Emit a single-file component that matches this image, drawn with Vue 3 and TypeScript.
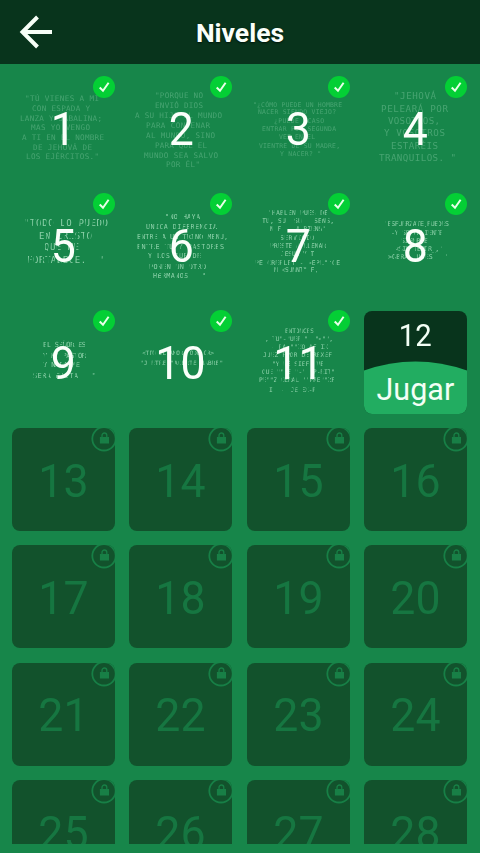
<script setup lang="ts">
// A verse line: text, left edge, right edge, vertical centre (tile units)
type Line = [string, number, number, number]
interface Verse {
  size: number
  worn?: boolean
  lines: Line[]
}

const verses: Verse[] = [
  { size: 7.6, lines: [
    ['"TÚ VIENES A MÍ', 13, 87, 22], ['CON ESPADA Y', 20, 78, 32], ['LANZA Y JABALINA;', 8, 90, 42],
    ['MAS YO VENGO', 19, 78, 51.5], ['A TI EN EL NOMBRE', 10, 92, 61], ['DE JEHOVÁ DE', 21, 80, 71],
    ['LOS EJÉRCITOS."', 14, 87, 80.5],
  ] },
  { size: 7.6, lines: [
    ['"PORQUE NO', 26, 74, 19], ['ENVIÓ DIOS', 26, 74, 29], ['A SU HIJO AL MUNDO', 6, 93, 39],
    ['PARA CONDENAR', 17, 81, 49], ['AL MUNDO, SINO', 17, 86, 59], ['PARA QUE EL', 26, 78, 69],
    ['MUNDO SEA SALVO', 15, 89, 79], ['POR ÉL"', 37, 71, 88.5],
  ] },
  { size: 6.4, lines: [
    ['"¿CÓMO PUEDE UN HOMBRE', 6, 95, 28.5], ['NACER SIENDO VIEJO?', 11, 89, 36], ['¿PUEDE ACASO', 27, 77, 44.5],
    ['ENTRAR POR SEGUNDA', 15, 89, 53], ['VEZ EN EL', 32, 68, 61], ['VIENTRE DE SU MADRE,', 12, 93, 69.5],
    ['Y NACER? "', 33, 74, 77.5],
  ] },
  { size: 9.2, lines: [
    ['"JEHOVÁ', 30, 72, 20], ['PELEARÁ POR', 17, 84, 32.5], ['VOSOTROS,', 24, 76, 45],
    ['Y VOSOTROS', 20, 81, 57], ['ESTARÉIS', 27, 74, 69.5], ['TRANQUILOS. "', 15, 92, 81.5],
  ] },
  { size: 9, worn: true, lines: [
    ['"TODO LO PUEDO', 12, 96, 29], ['EN CRISTO', 27, 80, 42], ['QUE ME', 32, 67, 53], ['FORTALECE.  "', 15, 92, 66],
  ] },
  { size: 6.8, worn: true, lines: [
    ['"NO HAYA', 36, 71, 23], ['UNICA DIFERENCIA', 17, 88, 33], ['ENTRE A UN TRINO MENU,', 8, 99, 42.5],
    ['ENTRE TU Y PASTORES', 8, 95, 52.5], ['Y LOS QUE DE', 19, 72, 62], ['PONEN UN OTRO', 20, 77, 72.5],
    ['HERMANOS   "', 24, 77, 82],
  ] },
  { size: 6.4, worn: true, lines: [
    ['"HABLEN PUES DE', 21, 81, 19], ['TU, SU  SU   SENS,', 15, 87, 27], ['N F  - A RIENS\'', 23, 79, 35],
    ['SERVICIO', 33, 67, 43.5], ['PRESTE A LLENAR', 23, 79, 52], ['JESUS Y T', 34, 67, 60],
    ['PE CREPLET - >EPL""CE', 8, 93, 69], ['N <SUNNT" F,', 27, 71, 76],
  ] },
  { size: 6.6, worn: true, lines: [
    ['"ESFUERZATE,PUEDES', 20, 85, 30], ['-Y SE VALIENTE', 27, 79, 38.5], ['SIEMPRE', 37, 64, 46.5],
    ['<SIN TEMOR_,"', 31, 79, 55], ['>OBRA LUCES   "', 24, 85, 63],
  ] },
  { size: 7, worn: true, lines: [
    ['EL SEÑOR ES', 31, 74, 33.5], ['Y MI PASTOR', 31, 74, 44], ['Y NADA ME', 31, 68, 53], ['SERA FALTA   "', 21, 84, 64],
  ] },
  { size: 6, worn: true, lines: [
    ['<TTO EL AMOR TODO CR>', 13, 85, 42], ['"J ETRE "ACERTE HABRE"', 11, 94, 52],
  ] },
  { size: 6.2, worn: true, lines: [
    ['ENTONCES', 38, 67, 19.5], [', TU"-"UEP "  "<"",', 18, 86, 27.5], ['- PA ""ZO AF IX', 24, 81, 35.5],
    ['JUEZ FPOR DE REXEF', 16, 85, 44], ['"Y NE SIEFF VE', 25, 77, 52.5], ['QUE "" E "-" "P-EIT"', 15, 88, 60.5],
    ['PE""Z CERAL ""PRE""ZF', 12, 88, 69], ['I  -  JE EX-P', 22, 69, 79],
  ] },
]

const current = 12
const levels = Array.from({ length: 28 }, (_, i) => i + 1)
</script>

<template>
  <div class="screen">
    <header class="bar">
      <svg class="back" viewBox="0 0 36 36" width="36" height="36">
        <path d="M34 18H5M19.5 3L4.5 18L19.5 33" fill="none" stroke="#f7fff7" stroke-width="4" />
      </svg>
      <h1 class="title">Niveles</h1>
    </header>
    <main class="list">
      <div
        v-for="n in levels"
        :key="n"
        class="tile"
        :class="{ done: n < current, locked: n > current, current: n === current }"
      >
        <template v-if="n < current">
          <svg class="verse" :class="{ worn: verses[n - 1].worn }" viewBox="0 0 103 103">
            <text
              v-for="(l, i) in verses[n - 1].lines"
              :key="i"
              :x="l[1]"
              :y="l[3] + verses[n - 1].size * 0.36"
              :font-size="verses[n - 1].size"
              :textLength="l[2] - l[1]"
            >{{ l[0] }}</text>
          </svg>
          <span class="num">{{ n }}</span>
          <svg class="badge" viewBox="0 0 22 22" width="22" height="22">
            <circle cx="11" cy="11" r="11" fill="#04cf35" />
            <path d="M6.7 11.5L10 14.8L15.6 6.8" fill="none" stroke="#e8ffe8" stroke-width="2" />
          </svg>
        </template>
        <template v-else-if="n === current">
          <span class="level">{{ n }}</span>
          <svg class="hill" viewBox="0 0 103 53" width="103" height="53">
            <path d="M0 9.5Q51.5 -8.5 103 9.5V53H0Z" fill="#22ad61" />
          </svg>
          <span class="play">Jugar</span>
        </template>
        <template v-else>
          <span class="num">{{ n }}</span>
          <svg class="lock" viewBox="0 0 24 25" width="24" height="25">
            <path d="M13 0H24V11H13Z" fill="#17864a" />
            <circle cx="13" cy="10.8" r="11.7" fill="#12522c" stroke="#177f46" stroke-width="1.8" />
            <path d="M8.9 8.9H18V15.5H8.9Z" fill="#187f46" />
            <path d="M11 9.2V7.4A2.4 2.4 0 0 1 15.8 7.4V9.2" fill="none" stroke="#187f46" stroke-width="1.3" />
          </svg>
        </template>
      </div>
    </main>
  </div>
</template>

<style>
body {
  margin: 0;
  background: #17864a;
}
</style>

<style scoped>
.screen {
  box-sizing: border-box;
  width: 480px;
  height: 853px;
  padding-bottom: 9.5px;
  display: flex;
  flex-direction: column;
  overflow: hidden;
  background: #17864a;
  font-family: Roboto, "Liberation Sans", sans-serif;
}
.bar {
  flex: none;
  height: 64px;
  display: grid;
  grid-template-columns: 60px 1fr 60px;
  align-items: center;
  background: #08341c;
}
.back {
  margin-left: 18px;
}
.title {
  margin: 1px 0 0;
  color: #fafffa;
  font-size: 26.5px;
  line-height: 32px;
  font-weight: 700;
  text-align: center;
  text-shadow: 0 1px 2px #00150a;
}
.list {
  flex: 1;
  min-height: 0;
  overflow: hidden;
  display: grid;
  grid-template-columns: repeat(4, 103px);
  grid-auto-rows: 103px;
  gap: 14.3px;
  padding: 12.3px 0 0 12px;
}
.tile {
  position: relative;
  display: flex;
  align-items: center;
  justify-content: center;
  border-radius: 8px;
}
.num {
  position: relative;
  padding-top: 2px;
  font-size: 47px;
  line-height: 56px;
  color: #fafffa;
  transform: scaleX(0.95);
}
.locked {
  background: #12522c;
  overflow: hidden;
}
.locked .num {
  color: #167641;
}
.verse {
  position: absolute;
  inset: 0;
  overflow: visible;
  fill: #6fbd92;
  opacity: 0.55;
  font-family: "DejaVu Sans Mono", "Liberation Mono", monospace;
}
.verse text {
  white-space: pre;
}
.verse.worn {
  fill: #a9e3c0;
  opacity: 0.8;
  mask-image: repeating-linear-gradient(97deg, #000 0 3px, transparent 4px 5px, #000 6px 11px, transparent 12px 13px);
}
.badge {
  position: absolute;
  top: -0.5px;
  right: 0;
}
.lock {
  position: absolute;
  top: 0;
  right: 0;
}
.current {
  flex-direction: column;
  justify-content: flex-start;
  overflow: hidden;
  background: #08341c;
}
.level,
.play {
  position: relative;
  font-size: 30.5px;
  line-height: 36px;
  color: #f2fff5;
}
.level {
  padding-top: 7px;
  transform: scaleX(0.96);
}
.play {
  margin-top: 18px;
}
.hill {
  position: absolute;
  left: 0;
  bottom: 0;
}
</style>
